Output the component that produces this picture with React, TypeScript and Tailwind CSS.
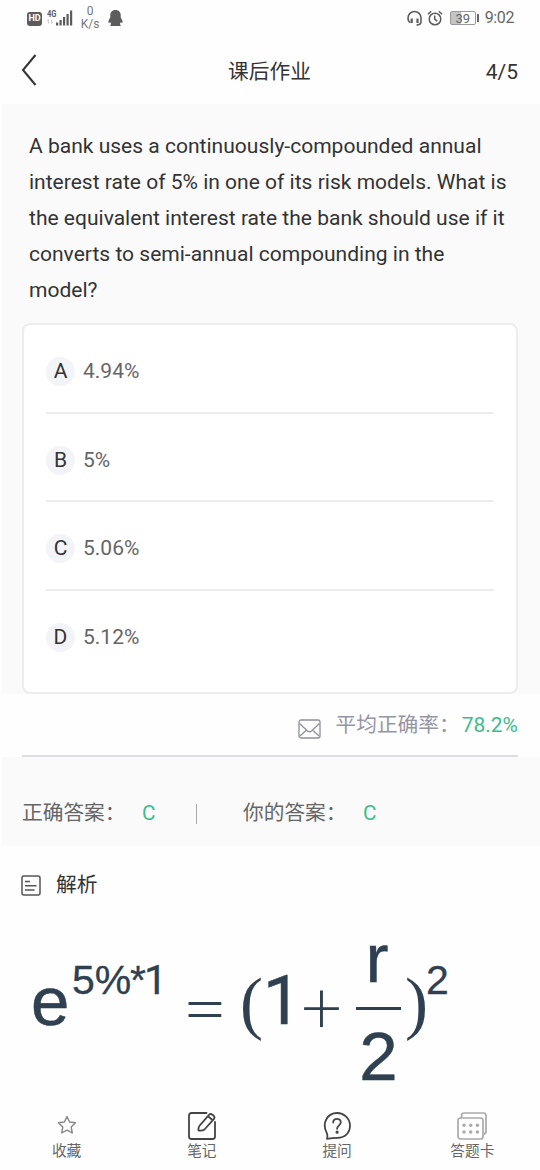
import { ReactNode } from "react";

interface Option {
  key: string;
  text: string;
}

const options: Option[] = [
  { key: "A", text: "4.94%" },
  { key: "B", text: "5%" },
  { key: "C", text: "5.06%" },
  { key: "D", text: "5.12%" },
];

function StatusBar() {
  return (
    <div className="flex h-9 items-center justify-between pl-[27px] pr-[26px] text-[#666]">
      <div className="flex items-center">
        <span className="mt-px flex h-[14px] w-[15px] items-center justify-center rounded-[3px] bg-[#5c5c5c] text-[9px] font-bold leading-none text-white">
          HD
        </span>
        <svg className="ml-[5px]" width="26" height="18" viewBox="0 0 26 18" fill="#5c5c5c">
          <text x="0" y="8" fontSize="9" fontWeight="700" fontFamily="Roboto" textLength="9.5" lengthAdjust="spacingAndGlyphs">4G</text>
          <path d="M1.5 10.5v4M0 12l1.5-1.5M4.5 10.5v4M6 13l-1.5 1.5" stroke="#cfcfcf" fill="none" />
          <rect x="9" y="13.5" width="2.2" height="3" />
          <rect x="12.5" y="11" width="2.2" height="5.5" />
          <rect x="16" y="8" width="2.2" height="8.5" />
          <rect x="19.5" y="5" width="2.2" height="11.5" />
          <rect x="23" y="1.5" width="2.2" height="15" />
        </svg>
        <div className="ml-[8px] flex w-[18px] flex-col items-center text-[12px] leading-[13px] text-[#777]">
          <span>0</span>
          <span>K/s</span>
        </div>
        <svg className="ml-[9px]" width="15" height="18" viewBox="0 0 15 18" fill="#5c5c5c">
          <path d="M7.5 1C4.2 1 2.3 3.2 2.3 6.2v2.3C1 10.5 0 12.5.5 13.5c.3.6 1.2.2 1.8-.6.1.8.5 1.5 1 2.1-.9.5-1.2 1.2-.9 2h10.2c.3-.8 0-1.5-.9-2 .5-.6.9-1.3 1-2.1.6.8 1.5 1.2 1.8.6.5-1-.5-3-1.8-5V6.2C12.7 3.2 10.8 1 7.5 1z" />
        </svg>
      </div>
      <div className="flex items-center">
        <svg width="16" height="16" viewBox="0 0 16 16" fill="none" stroke="#5c5c5c" strokeWidth="1.6">
          <path d="M3.5 12.5C1.8 12 1 10.5 1 8a6.5 6.5 0 0 1 13 0v3.5c0 2-1.5 3.5-4.5 3.5" />
          <path d="M4.7 8.5v4.5M10.5 8.5v4.5" strokeWidth="2.2" />
        </svg>
        <svg className="ml-[4px]" width="16" height="16" viewBox="0 0 16 16" fill="none" stroke="#5c5c5c" strokeWidth="1.5">
          <circle cx="8" cy="9" r="5.8" />
          <path d="M7.7 5.5v3.7l2.5 2M.9 4.2 4.2 1.3M11.8 1.3l3.3 2.9" />
        </svg>
        <span className="ml-[7px] flex h-[14px] w-[26px] items-center justify-center rounded-[2px] border border-[#999] bg-linear-to-r from-[#c4c4c4] from-40% to-white to-40% text-[13px] leading-none text-[#666]">
          39
        </span>
        <span className="ml-px h-[8px] w-[2px] bg-[#666]" />
        <span className="ml-[6px] text-[16px] tracking-[-0.4px]">9:02</span>
      </div>
    </div>
  );
}

function Header() {
  return (
    <header className="grid h-[68px] grid-cols-3 items-center pl-[21px] pr-[22px] text-[20.7px] text-[#333]">
      <svg width="16" height="32" viewBox="0 0 16 32" fill="none" stroke="#333" strokeWidth="2">
        <path d="M14.5 1 2 16l12.5 15" />
      </svg>
      <h1 className="pt-[6px] text-center">课后作业</h1>
      <span className="pt-[5px] text-right text-[21px]">4/5</span>
    </header>
  );
}

function Formula() {
  return (
    <div className="flex items-start pl-[31px] pt-[30px] font-['Liberation_Sans',Arial,sans-serif] text-[69px] leading-none text-[#2f4050]">
      <span className="mt-[15px] w-[41px] [-webkit-text-stroke:0.5px]">e</span>
      <div className="mt-[8px] flex w-[110px] text-[41px] [-webkit-text-stroke:0.3px]">
        <span className="w-[58px]">5%</span>
        <span className="w-[14px]">*</span>
        <span className="font-[Roboto]">1</span>
      </div>
      <span className="mt-[14px] w-[58px] font-['Lato',sans-serif] text-[79px] font-light">=</span>
      <span className="mt-[17px] w-[23px] font-['Liberation_Serif',serif] text-[69px]">(</span>
      <span className="mt-[15px] w-[37px] font-[Roboto] text-[68px] [-webkit-text-stroke:0.5px]">1</span>
      <span className="mt-[17px] w-[56px] font-['Lato',sans-serif] text-[74px] font-light">+</span>
      <div className="mt-[-28px] flex w-[45px] flex-col items-center [-webkit-text-stroke:0.5px]">
        <span className="ml-[-3px]">r</span>
        <span className="mt-[14px] h-[3px] w-full bg-[#2f4050]" />
        <span className="mt-[12px]">2</span>
      </div>
      <span className="mt-[17px] ml-[4px] w-[23px] font-['Liberation_Serif',serif] text-[69px]">)</span>
      <span className="mt-[8px] ml-[-2px] text-[41px] [-webkit-text-stroke:0.3px]">2</span>
    </div>
  );
}

function NavItem({ label, children, className = "" }: { label: string; children: ReactNode; className?: string }) {
  return (
    <button className={`flex flex-1 flex-col items-center text-[14.7px] leading-[20px] text-[#666] ${className}`}>
      <span className="flex h-[30px] items-center">{children}</span>
      <span>{label}</span>
    </button>
  );
}

export default function App() {
  return (
    <div className="flex h-[1170px] w-[540px] flex-col overflow-hidden bg-[#fefefe] font-[Roboto,'Noto_Sans_CJK_SC',sans-serif]">
      <StatusBar />
      <Header />

      <section className="ml-[2px] h-[590px] bg-[#fafafa] pl-5 pr-[22px] pt-6">
        <p className="px-[7px] text-[21.04px] leading-9 whitespace-nowrap text-[#333]">
          A bank uses a continuously-compounded annual
          <br />
          interest rate of 5% in one of its risk models. What is
          <br />
          the equivalent interest rate the bank should use if it
          <br />
          converts to semi-annual compounding in the
          <br />
          model?
        </p>
        <div className="mt-[15px] h-[371px] rounded-[8px] border-2 border-[#ededef] bg-white px-[22px]">
          {options.map((option) => (
            <div
              key={option.key}
              className="flex h-[88.5px] items-center border-b-2 border-[#ededed] pt-[7px] text-[21px] text-[#666] last:border-b-0 last:pt-[5px]"
            >
              <span className="flex size-[29px] items-center justify-center rounded-full bg-[#f3f4f8] text-[#333]">
                {option.key}
              </span>
              <span className="ml-[8px]">{option.text}</span>
            </div>
          ))}
        </div>
      </section>

      <section className="mx-[22px] flex h-[63px] items-center justify-end border-b-2 border-[#dfdfe3] pt-[2px] text-[20.7px] text-[#9696a3]">
        <svg className="mt-[6px] mr-[15px]" width="23" height="20" viewBox="0 0 23 20" fill="none" stroke="#8f8f9c" strokeWidth="1.3">
          <rect x="1" y="1" width="21" height="18" rx="2" />
          <path d="M1.5 4.5 9.5 12c1.3 1 2.7 1 4 0l8-7.5M2 17l6-5.5M21 17l-6-5.5" />
        </svg>
        <span className="mr-[2px]">平均正确率：</span>
        <span className="text-[21px] text-[#3bbd8b]">78.2%</span>
      </section>

      <section className="ml-[2px] flex h-[89px] items-center bg-[#fafafa] pl-5 pt-[24px] text-[20.7px] text-[#666]">
        <span className="w-[120px]">正确答案：</span>
        <span className="w-[54px] text-[#3bbd8b]">C</span>
        <span className="h-[20px] w-px bg-[#aaa]" />
        <span className="ml-[46px] w-[120px]">你的答案：</span>
        <span className="text-[#3bbd8b]">C</span>
      </section>

      <section className="h-[247px]">
        <div className="flex h-[76px] items-center pl-[21px] text-[20.7px] text-[#333]">
          <svg className="mr-[15px] mt-[2px]" width="20" height="21" viewBox="0 0 20 21" fill="none" stroke="#555" strokeWidth="1.5">
            <rect x="1" y="1" width="18" height="19" rx="2" />
            <path d="M4 6.5h5M4 10.7h11.5M4 15h9.5" />
          </svg>
          <h2 className="pt-[3px]">解析</h2>
        </div>
        <Formula />
      </section>

      <nav className="flex pt-[18px]">
        <NavItem label="收藏" className="ml-[-1px]">
          <svg className="mb-[3px]" width="20" height="20" viewBox="0 0 20 20" fill="none" stroke="#888" strokeWidth="1.4" strokeLinejoin="round">
            <path d="m10 1.5 2.6 5.5 5.9.8-4.3 4.2 1.1 6-5.3-2.9L4.7 18l1.1-6L1.5 7.8l5.9-.8z" />
          </svg>
        </NavItem>
        <NavItem label="笔记">
          <svg width="28" height="28" viewBox="0 0 28 28" fill="none" stroke="#444" strokeWidth="1.8" strokeLinecap="round" strokeLinejoin="round">
            <path d="M18.5 1H3.5C2 1 1 2 1 3.5v21C1 26 2 27 3.5 27h21c1.5 0 2.5-1 2.5-2.5V10" />
            <path d="M21 2.8c1.8-2.2 6.6 1.2 5.2 3.9L16.5 17.5c-1.5 1.2-3.5 1.3-6 1-.3-2.5-.1-3.5 1.2-5zM20 4.2l4.8 4" />
          </svg>
        </NavItem>
        <NavItem label="提问">
          <svg width="28" height="28" viewBox="0 0 28 28" fill="none" stroke="#444" strokeWidth="1.8" strokeLinecap="round" strokeLinejoin="round">
            <path d="M4 26.8c.6-2.3.5-4.3-.3-6C-1.5 11 4.5 1 14 1c7 0 13 5.5 13 12.6 0 8-5.5 12.2-12.5 12.2-4 0-6.5.3-10.5 1z" />
            <path d="M10.2 10.5c0-4.8 7.8-4.8 7.6 0-.2 2.8-3.7 3-3.7 6.3" />
            <circle cx="14.1" cy="20.2" r=".7" fill="#444" />
          </svg>
        </NavItem>
        <NavItem label="答题卡">
          <svg width="30" height="28" viewBox="0 0 30 28" fill="none" stroke="#aaa" strokeWidth="1.7">
            <path d="M4.5 6V3.5C4.5 2 5.5 1 7 1h19.5C28 1 29 2 29 3.5V19.5c0 1.5-1 2.5-2.5 2.5" />
            <rect x="1" y="6" width="25" height="21" rx="2.5" />
            <g fill="#aaa" stroke="none">
              <circle cx="7" cy="13.3" r="1.7" />
              <circle cx="13.7" cy="13.3" r="1.7" />
              <circle cx="20.4" cy="13.3" r="1.7" />
              <circle cx="7" cy="20" r="1.7" />
              <circle cx="13.7" cy="20" r="1.7" />
              <circle cx="20.4" cy="20" r="1.7" />
            </g>
          </svg>
        </NavItem>
      </nav>
    </div>
  );
}
